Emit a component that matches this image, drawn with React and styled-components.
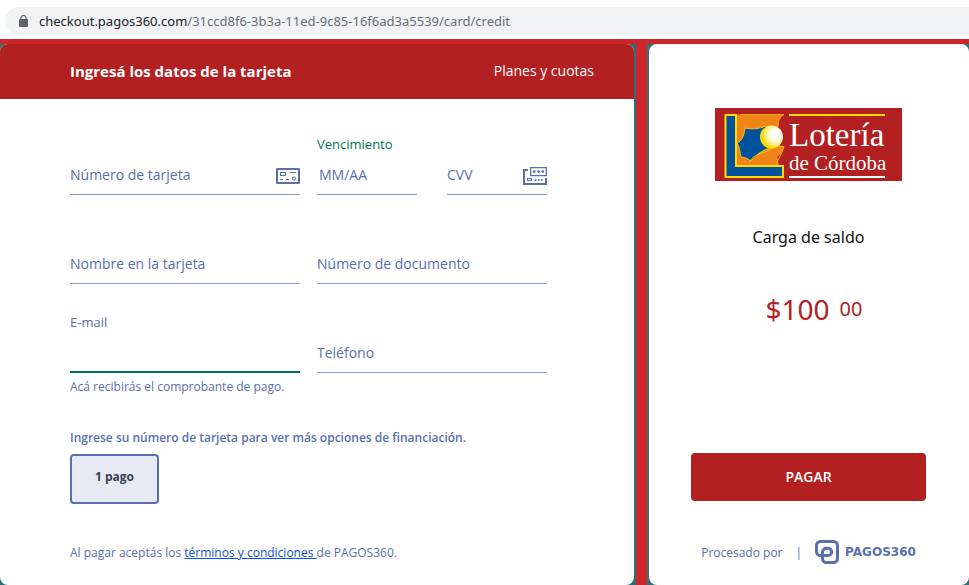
import React from "react";
import styled, { createGlobalStyle } from "styled-components";

const color = {
  brand: "#b22021",
  page: "#cc252a",
  teal: "#2a7178",
  blue: "#5a6fae",
  line: "#8a9dcd",
  green: "#00745a",
};

const GlobalStyle = createGlobalStyle`
  * { box-sizing: border-box; }
  body {
    margin: 0;
    background: ${color.page};
    font-family: "Open Sans", "Noto Sans", sans-serif;
    color: ${color.blue};
  }
`;

const Page = styled.div`
  min-height: 100vh;
  display: flex;
  flex-direction: column;
`;

const BrowserBar = styled.header`
  background: #fff;
  padding: 7px 0 4px 5px;
`;

const Address = styled.div`
  display: flex;
  align-items: center;
  gap: 11px;
  height: 28px;
  padding-left: 14px;
  border-radius: 14px 0 0 14px;
  background: #f1f3f4;
  color: #6a6e73;
  font-family: "Noto Sans", sans-serif;
  font-size: 13px;
  white-space: nowrap;
`;

const Host = styled.span`
  color: #202124;
`;

const Checkout = styled.main`
  flex: 1;
  display: grid;
  grid-template-columns: minmax(0, 1fr) 15px 320px;
  border-top: 5px solid ${color.page};
  background: ${color.teal};
`;

const Divider = styled.div`
  margin: 0 2px;
  background: ${color.page};
`;

const Panel = styled.section`
  background: #fff;
  border-radius: 8px;
  overflow: hidden;
`;

const PanelHeader = styled.div`
  display: flex;
  align-items: center;
  justify-content: space-between;
  height: 55px;
  padding: 0 40px 2px 70px;
  background: ${color.brand};
`;

const Title = styled.h1`
  margin: 0;
  color: #fff;
  font-size: 15px;
  font-weight: 700;
`;

const PlansLink = styled.a`
  color: #fff;
  font-size: 14px;
  font-weight: 500;
  text-decoration: none;
`;

const Form = styled.form`
  padding: 35px 70px 0;
`;

const Fields = styled.div`
  display: grid;
  grid-template-columns: 1fr 1fr;
  gap: 28px 17px;
  align-items: start;
  max-width: 477px;
`;

const Pair = styled.div`
  display: grid;
  grid-template-columns: 1fr 1fr;
  gap: 30px;
`;

const FieldBox = styled.div`
  display: flex;
  flex-direction: column;
  min-width: 0;
`;

const FieldLabel = styled.label`
  height: 20px;
  line-height: 20px;
  font-size: 13px;
  color: ${(p) => (p.$accent ? color.green : color.blue)};
`;

const Control = styled.div`
  display: flex;
  align-items: center;
  height: 41px;
  border-bottom: ${(p) => (p.$active ? `2px solid ${color.green}` : `1px solid ${color.line}`)};
  svg {
    flex: none;
    margin-top: 4px;
  }
`;

const Input = styled.input`
  flex: 1;
  min-width: 0;
  height: 40px;
  padding: 0 0 0 ${(p) => (p.$inset ? "2px" : "0")};
  border: 0;
  outline: 0;
  background: transparent;
  color: ${color.blue};
  font: 14px "Open Sans", "Noto Sans", sans-serif;
  &::placeholder { color: ${color.blue}; opacity: 1; }
`;

const Hint = styled.p`
  margin: 4px 0 0;
  line-height: 20px;
  font-size: 12px;
`;

const PlanNote = styled.p`
  margin: 31px 0 6px;
  line-height: 20px;
  font-size: 12px;
  font-weight: 600;
`;

const PlanButton = styled.button`
  width: 89px;
  height: 50px;
  padding: 0 0 6px;
  border: 2px solid ${color.blue};
  border-radius: 4px;
  background: #e7eaf3;
  color: #3a3d56;
  font: 700 12px "Open Sans", sans-serif;
`;

const Terms = styled.p`
  margin: 39px 0 22px;
  line-height: 20px;
  font-size: 12px;
`;

const TermsLink = styled.a`
  color: #0b50e0;
`;

const Summary = styled(Panel)`
  display: flex;
  flex-direction: column;
  align-items: center;
  padding: 64px 43px 21px 42px;
`;

const Concept = styled.p`
  margin: 44px 0 40px;
  line-height: 24px;
  font-family: "Noto Sans", sans-serif;
  font-size: 16px;
  color: #111;
`;

const Price = styled.div`
  display: flex;
  align-items: center;
  gap: 10px;
  line-height: 40px;
  padding-left: 11px;
  font-family: "Noto Sans", sans-serif;
  font-size: 28px;
  color: ${color.brand};
`;

const Cents = styled.span`
  font-size: 20px;
`;

const PayButton = styled.button`
  width: 100%;
  height: 48px;
  margin-top: auto;
  padding: 0 0 2px;
  border: 0;
  border-radius: 4px;
  background: ${color.brand};
  color: #fff;
  font: 600 14px "Open Sans", sans-serif;
`;

const Processor = styled.footer`
  display: flex;
  align-items: center;
  height: 24px;
  margin-top: 39px;
  gap: 13px;
  font-size: 12px;
  white-space: nowrap;
`;

const Brand = styled.span`
  display: flex;
  align-items: center;
  gap: 6px;
  font: 700 12px "DejaVu Sans", sans-serif;
`;

const LockIcon = () => (
  <svg width="9" height="12" viewBox="0 0 9 12" aria-hidden="true">
    <rect y="4" width="9" height="8" rx="1" fill="#5f6368" />
    <path d="M2 5V3a2.5 2.5 0 0 1 5 0v2" fill="none" stroke="#5f6368" strokeWidth="1.2" />
  </svg>
);

const CardIcon = () => (
  <svg width="24" height="16" viewBox="0 0 24 16" fill="none" stroke={color.blue} aria-hidden="true">
    <rect x="1" y="1" width="22" height="14" rx="0.5" strokeWidth="2" />
    <rect x="4.5" y="4.5" width="5" height="3" />
    <path d="M14 4.5h6M4 11.5h3M10 11.5h3" />
    <circle cx="18" cy="10.5" r="1.6" />
  </svg>
);

const CvvIcon = () => (
  <svg width="24" height="18" viewBox="0 0 24 18" fill="none" stroke={color.blue} aria-hidden="true">
    <path d="M5 3H1v14h22v-6" strokeWidth="2" />
    <rect x="7.6" y="0.6" width="15.8" height="8" strokeWidth="1.3" />
    <rect x="4.5" y="11.5" width="4" height="2" />
    <g fill={color.blue} stroke="none">
      <circle cx="11.2" cy="4.6" r="1.4" />
      <circle cx="15.5" cy="4.6" r="1.4" />
      <circle cx="19.8" cy="4.6" r="1.4" />
      <circle cx="12.5" cy="13" r="1" />
      <circle cx="15.6" cy="13" r="1" />
      <circle cx="18.7" cy="13" r="1" />
    </g>
  </svg>
);

const PagosMark = () => (
  <svg width="24" height="24" viewBox="0 0 24 24" fill="none" stroke={color.blue} strokeWidth="3" aria-hidden="true">
    <path d="M8 15.500H5.500a4 4 0 0 1-4-4V5.500a4 4 0 0 1 4-4h13a4 4 0 0 1 4 4v13a4 4 0 0 1-4 4h-7a4 4 0 0 1-4-4V12a3.800 3.800 0 0 1 4-3.700h1.500a3.600 3.600 0 0 1 0 7.200H8" />
  </svg>
);

const LoteriaLogo = () => (
  <svg width="187" height="73" viewBox="0 0 187 73" role="img" aria-label="Lotería de Córdoba">
    <defs>
      <radialGradient id="ball" cx="0.68" cy="0.4" r="0.66">
        <stop offset="0.3" stopColor="#fff" />
        <stop offset="0.65" stopColor="#fff08a" />
        <stop offset="0.9" stopColor="#ffd900" />
      </radialGradient>
    </defs>
    <rect width="187" height="73" fill={color.brand} />
    <path d="M22 6.500H69Q63 9 63 19L58 38L69 38.500Q67 46 62 49L64 57H22Z" fill="#ef8417" />
    <path d="M25 6.500H69Q63 9 63 19" fill="none" stroke="#f6a51b" />
    <path d="M10.500 7H21V58H68V69H10.500Z" fill="#00529a" stroke="#ffdc00" strokeWidth="2" />
    <path d="M30 20Q40 22.500 51 18L57 39Q48 42 43 46L36 53Q31 49 26 49L24 39L22 35Q29 32 30 20Z" fill="#00529a" stroke="#f6bd18" />
    <path d="M34 57Q38 49 44 46Q55 43 58 39Q64 37 69 38.500Q67 45 62 49Q65 53 60 57Z" fill="#ef8417" />
    <path d="M34 54Q38 48 44 46Q55 43 58 39Q64 37 69 38.500Q67 45 61 56" fill="none" stroke="#f6bd18" />
    <circle cx="56.500" cy="29" r="11.500" fill="url(#ball)" />
    <path d="M74 7H170" stroke="#ffdc00" strokeWidth="2" />
    <path d="M74 69H170" stroke="#fff" strokeWidth="2" />
    <g fill="#fff" fontFamily="'Liberation Serif', serif">
      <text x="74" y="38" fontSize="33">Lotería</text>
      <text x="74" y="62" fontSize="21">de Córdoba</text>
    </g>
  </svg>
);

function Field({ id, label, placeholder, hint, accent, active, icon, type = "text" }) {
  return (
    <FieldBox>
      <FieldLabel htmlFor={id} $accent={accent}>{label}</FieldLabel>
      <Control $active={active}>
        <Input
          id={id}
          type={type}
          placeholder={placeholder}
          aria-label={label || placeholder}
          $inset={accent}
        />
        {icon}
      </Control>
      {hint && <Hint>{hint}</Hint>}
    </FieldBox>
  );
}

export default function App() {
  return (
    <Page>
      <GlobalStyle />
      <BrowserBar>
        <Address>
          <LockIcon />
          <span>
            <Host>checkout.pagos360.com</Host>/31ccd8f6-3b3a-11ed-9c85-16f6ad3a5539/card/credit
          </span>
        </Address>
      </BrowserBar>
      <Checkout>
        <Panel>
          <PanelHeader>
            <Title>Ingresá los datos de la tarjeta</Title>
            <PlansLink href="#planes">Planes y cuotas</PlansLink>
          </PanelHeader>
          <Form>
            <Fields>
              <Field id="card" placeholder="Número de tarjeta" icon={<CardIcon />} />
              <Pair>
                <Field id="expiry" label="Vencimiento" placeholder="MM/AA" accent />
                <Field id="cvv" placeholder="CVV" icon={<CvvIcon />} />
              </Pair>
              <Field id="name" placeholder="Nombre en la tarjeta" />
              <Field id="document" placeholder="Número de documento" />
              <Field id="email" type="email" label="E-mail" hint="Acá recibirás el comprobante de pago." active />
              <Field id="phone" type="tel" placeholder="Teléfono" />
            </Fields>
            <PlanNote>Ingrese su número de tarjeta para ver más opciones de financiación.</PlanNote>
            <PlanButton type="button">1 pago</PlanButton>
            <Terms>
              Al pagar aceptás los <TermsLink href="#terminos">términos y condiciones </TermsLink>de PAGOS360.
            </Terms>
          </Form>
        </Panel>
        <Divider />
        <Summary>
          <LoteriaLogo />
          <Concept>Carga de saldo</Concept>
          <Price>
            <span>$100</span>
            <Cents>00</Cents>
          </Price>
          <PayButton type="button">PAGAR</PayButton>
          <Processor>
            <span>Procesado por</span>
            <span>|</span>
            <Brand>
              <PagosMark />
              PAGOS360
            </Brand>
          </Processor>
        </Summary>
      </Checkout>
    </Page>
  );
}
